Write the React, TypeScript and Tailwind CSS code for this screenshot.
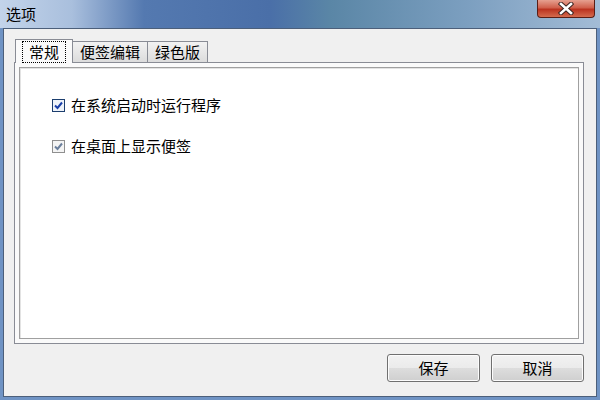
import React from "react";

const font = { fontFamily: '"Noto Sans CJK SC", "Noto Sans", sans-serif' };

const Check = ({ dim }: { dim?: boolean }) => (
  <span
    className={`flex h-[13px] w-[13px] items-center justify-center border ${
      dim ? "border-[#8f8f8f] bg-[#f4f4f4]" : "border-[#1c3e6e] bg-[#eef3fa]"
    }`}
  >
    <svg width="9" height="9" viewBox="0 0 9 9">
      <path
        d="M1 4.5 L3.5 7 L8 1.5"
        fill="none"
        stroke={dim ? "#6b7f9c" : "#1a3fa8"}
        strokeWidth="2"
      />
    </svg>
  </span>
);

const Button = ({ label }: { label: string }) => (
  <button className="h-[28px] w-[93px] rounded-[3px] border border-[#707070] bg-[linear-gradient(#f2f2f2_0%,#ebebeb_50%,#dddddd_51%,#cfcfcf_100%)] text-[15px] text-black shadow-[inset_0_0_0_1px_#fcfcfc]">
    {label}
  </button>
);

export default function App() {
  return (
    <div
      style={font}
      className="flex h-[400px] w-[600px] flex-col bg-[#6f93c4]"
    >
      {/* title bar */}
      <div className="flex h-[28px] items-start justify-between bg-[linear-gradient(90deg,#c3d4ea_0%,#a9bfdd_12%,#5479b0_24%,#4a6fa8_45%,#5a86a6_55%,#7c9fc0_78%,#a3bcd6_100%)]">
        <span className="pl-[6px] pt-[4px] text-[15px] leading-[20px] text-black">选项</span>
        <div className="mr-[5px] flex h-[18px] w-[58px] items-center justify-center rounded-b-[4px] border border-t-0 border-[#5a1e16] bg-[linear-gradient(#e6a090_0%,#d0604c_45%,#bb3320_55%,#d46b4e_100%)]">
          <svg width="16" height="13" viewBox="0 0 16 13">
            <path
              d="M3 2 L13 11 M13 2 L3 11"
              stroke="#3a2320"
              strokeWidth="4.5"
              strokeLinecap="square"
            />
            <path
              d="M3 2 L13 11 M13 2 L3 11"
              stroke="#ffffff"
              strokeWidth="2.6"
              strokeLinecap="square"
            />
          </svg>
        </div>
      </div>

      {/* client area */}
      <div className="mx-[3px] mb-[3px] flex flex-1 flex-col border border-[#4c5f7a] bg-[#f0f0f0] pb-[13px] pl-[10px] pr-[12px] pt-[10px]">
        {/* tabs */}
        <div className="flex h-[23px] items-end text-[15px] leading-[20px] text-black">
          <div className="relative z-10 -mb-px ml-px flex h-[24px] w-[58px] items-center justify-center border border-b-0 border-[#898c95] bg-[#fafafa]">
            <span className="border border-dotted border-black px-[6px]">常规</span>
          </div>
          <div className="flex h-[21px] w-[75px] items-center justify-center border border-b-0 border-l-0 border-[#898c95] bg-[linear-gradient(#f2f2f2,#dcdcdc)]">
            便签编辑
          </div>
          <div className="flex h-[21px] w-[60px] items-center justify-center border border-b-0 border-l-0 border-[#898c95] bg-[linear-gradient(#f2f2f2,#dcdcdc)]">
            绿色版
          </div>
        </div>

        {/* tab panel */}
        <div className="flex h-[282px] flex-col border border-[#898c95] bg-[#fafafa] p-[4px]">
          <div className="flex flex-1 flex-col gap-[23px] border border-[#a0a0a0] bg-white pl-[32px] pt-[28px] shadow-[inset_1px_1px_0_#e3e3e3]">
            <label className="flex items-center gap-[6px] text-[15px] leading-[18px] text-black">
              <Check />
              在系统启动时运行程序
            </label>
            <label className="flex items-center gap-[6px] text-[15px] leading-[18px] text-black">
              <Check dim />
              在桌面上显示便签
            </label>
          </div>
        </div>

        {/* buttons */}
        <div className="mt-[10px] flex justify-end gap-[11px]">
          <Button label="保存" />
          <Button label="取消" />
        </div>
      </div>
    </div>
  );
}
